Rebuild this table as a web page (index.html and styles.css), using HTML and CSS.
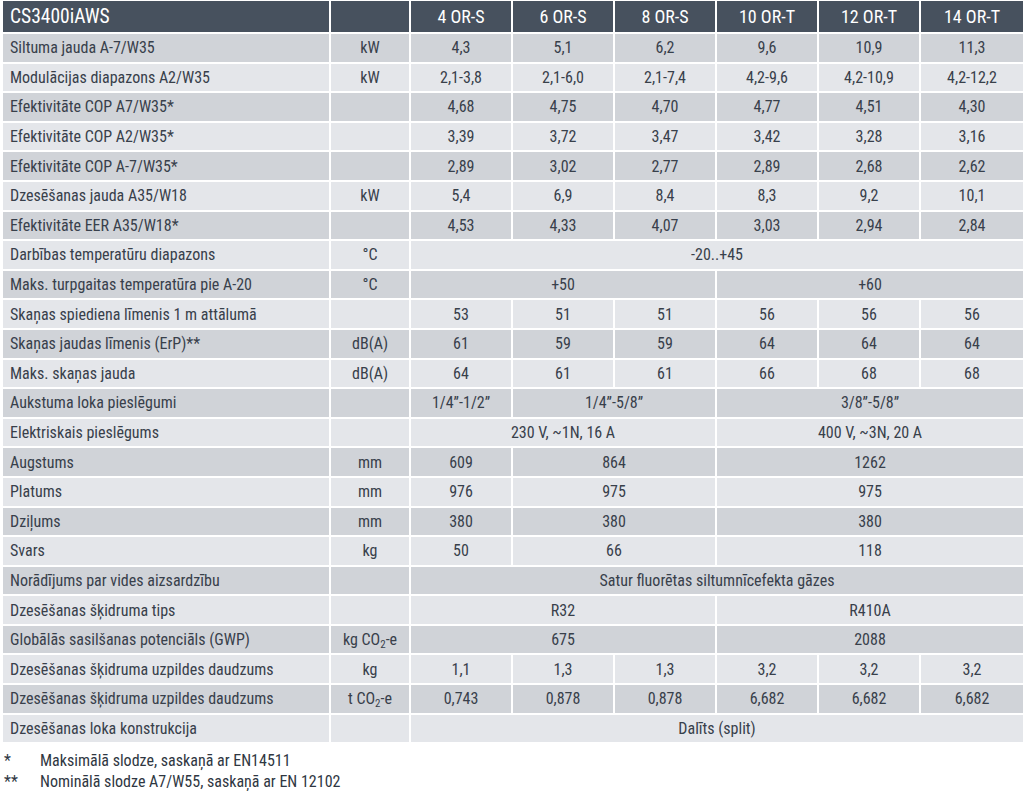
FILE: index.html
```html
<!DOCTYPE html>
<html lang="lv">
<head>
<meta charset="utf-8">
<title>CS3400iAWS</title>
<link rel="stylesheet" href="styles.css">
</head>
<body>
<table class="spec">
  <colgroup>
    <col class="c-label"><col class="c-unit">
    <col class="c-data"><col class="c-data"><col class="c-data"><col class="c-data"><col class="c-data"><col class="c-data">
  </colgroup>
  <thead>
    <tr class="head">
      <th class="label title">CS3400iAWS</th><th></th>
      <th>4 OR-S</th><th>6 OR-S</th><th>8 OR-S</th><th>10 OR-T</th><th>12 OR-T</th><th>14 OR-T</th>
    </tr>
  </thead>
  <tbody>
    <tr class="dark"><td class="label">Siltuma jauda A-7/W35</td><td>kW</td><td>4,3</td><td>5,1</td><td>6,2</td><td>9,6</td><td>10,9</td><td>11,3</td></tr>
    <tr class="light"><td class="label">Modulācijas diapazons A2/W35</td><td>kW</td><td>2,1-3,8</td><td>2,1-6,0</td><td>2,1-7,4</td><td>4,2-9,6</td><td>4,2-10,9</td><td>4,2-12,2</td></tr>
    <tr class="dark"><td class="label">Efektivitāte COP A7/W35*</td><td></td><td>4,68</td><td>4,75</td><td>4,70</td><td>4,77</td><td>4,51</td><td>4,30</td></tr>
    <tr class="light"><td class="label">Efektivitāte COP A2/W35*</td><td></td><td>3,39</td><td>3,72</td><td>3,47</td><td>3,42</td><td>3,28</td><td>3,16</td></tr>
    <tr class="dark"><td class="label">Efektivitāte COP A-7/W35*</td><td></td><td>2,89</td><td>3,02</td><td>2,77</td><td>2,89</td><td>2,68</td><td>2,62</td></tr>
    <tr class="light"><td class="label">Dzesēšanas jauda A35/W18</td><td>kW</td><td>5,4</td><td>6,9</td><td>8,4</td><td>8,3</td><td>9,2</td><td>10,1</td></tr>
    <tr class="dark"><td class="label">Efektivitāte EER A35/W18*</td><td></td><td>4,53</td><td>4,33</td><td>4,07</td><td>3,03</td><td>2,94</td><td>2,84</td></tr>
    <tr class="light"><td class="label">Darbības temperatūru diapazons</td><td>°C</td><td colspan="6">-20..+45</td></tr>
    <tr class="dark"><td class="label">Maks. turpgaitas temperatūra pie A-20</td><td>°C</td><td colspan="3">+50</td><td colspan="3">+60</td></tr>
    <tr class="light"><td class="label">Skaņas spiediena līmenis 1 m attālumā</td><td></td><td>53</td><td>51</td><td>51</td><td>56</td><td>56</td><td>56</td></tr>
    <tr class="dark"><td class="label">Skaņas jaudas līmenis (ErP)**</td><td>dB(A)</td><td>61</td><td>59</td><td>59</td><td>64</td><td>64</td><td>64</td></tr>
    <tr class="light"><td class="label">Maks. skaņas jauda</td><td>dB(A)</td><td>64</td><td>61</td><td>61</td><td>66</td><td>68</td><td>68</td></tr>
    <tr class="dark"><td class="label">Aukstuma loka pieslēgumi</td><td></td><td>1/4”-1/2”</td><td colspan="2">1/4”-5/8”</td><td colspan="3">3/8”-5/8”</td></tr>
    <tr class="light"><td class="label">Elektriskais pieslēgums</td><td></td><td colspan="3">230 V, ~1N, 16 A</td><td colspan="3">400 V, ~3N, 20 A</td></tr>
    <tr class="dark"><td class="label">Augstums</td><td>mm</td><td>609</td><td colspan="2">864</td><td colspan="3">1262</td></tr>
    <tr class="light"><td class="label">Platums</td><td>mm</td><td>976</td><td colspan="2">975</td><td colspan="3">975</td></tr>
    <tr class="dark"><td class="label">Dziļums</td><td>mm</td><td>380</td><td colspan="2">380</td><td colspan="3">380</td></tr>
    <tr class="light"><td class="label">Svars</td><td>kg</td><td>50</td><td colspan="2">66</td><td colspan="3">118</td></tr>
    <tr class="dark"><td class="label">Norādījums par vides aizsardzību</td><td></td><td colspan="6">Satur fluorētas siltumnīcefekta gāzes</td></tr>
    <tr class="light"><td class="label">Dzesēšanas šķidruma tips</td><td></td><td colspan="3">R32</td><td colspan="3">R410A</td></tr>
    <tr class="dark"><td class="label">Globālās sasilšanas potenciāls (GWP)</td><td>kg CO<sub>2</sub>-e</td><td colspan="3">675</td><td colspan="3">2088</td></tr>
    <tr class="light"><td class="label">Dzesēšanas šķidruma uzpildes daudzums</td><td>kg</td><td>1,1</td><td>1,3</td><td>1,3</td><td>3,2</td><td>3,2</td><td>3,2</td></tr>
    <tr class="dark"><td class="label">Dzesēšanas šķidruma uzpildes daudzums</td><td>t CO<sub>2</sub>-e</td><td>0,743</td><td>0,878</td><td>0,878</td><td>6,682</td><td>6,682</td><td>6,682</td></tr>
    <tr class="light"><td class="label">Dzesēšanas loka konstrukcija</td><td></td><td colspan="6">Dalīts (split)</td></tr>
  </tbody>
</table>
<div class="notes">
  <div class="note"><span class="mark">*</span><span>Maksimālā slodze, saskaņā ar EN14511</span></div>
  <div class="note"><span class="mark">**</span><span>Nominālā slodze A7/W55, saskaņā ar EN 12102</span></div>
</div>
</body>
</html>
```

FILE: styles.css
```css
html, body {
  margin: 0;
  padding: 0;
  background: #ffffff;
}

body {
  font-family: Roboto, "Liberation Sans", sans-serif;
  font-stretch: 80%;
  color: #38404b;
}

.spec {
  margin: 1px 0 0 3px;
  border-collapse: separate;
  border-spacing: 0;
  table-layout: fixed;
  width: 1020px;
  font-size: 16px;
}

.c-label { width: 328px; }
.c-unit { width: 80px; }
.c-data { width: 102px; }

.spec th,
.spec td {
  box-sizing: border-box;
  padding: 0;
  border-right: 2px solid #ffffff;
  border-bottom: 2px solid #ffffff;
  text-align: center;
  vertical-align: middle;
  white-space: nowrap;
  font-weight: normal;
}

.spec th:last-child,
.spec td:last-child {
  border-right: 0;
}

.head th {
  height: 33px;
  background: #47515e;
  color: #ffffff;
  font-size: 18px;
}

.head .title {
  font-size: 19.5px;
}

.spec td {
  height: 29.6px;
}

.spec .label {
  text-align: left;
  padding-left: 7px;
}

.dark td { background: #d0d3d8; }
.light td { background: #e4e6ea; }

.spec sub {
  font-size: 11px;
  line-height: 0;
  vertical-align: -3px;
}

.notes {
  margin-top: 6px;
  font-size: 16px;
  line-height: 21px;
  color: #2f3742;
}

.note {
  display: flex;
}

.mark {
  width: 40px;
  padding-left: 4px;
  box-sizing: border-box;
  flex: none;
}
```
